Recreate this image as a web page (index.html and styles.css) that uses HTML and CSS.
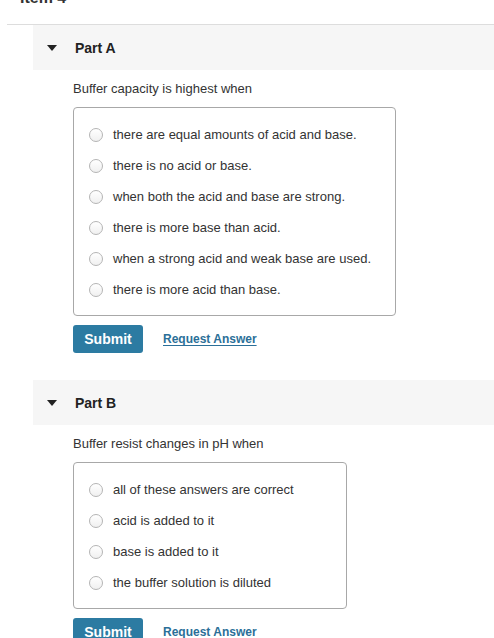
FILE: index.html
```html
<!DOCTYPE html>
<html>
<head>
<meta charset="utf-8">
<link rel="stylesheet" href="styles.css">
</head>
<body>
<h2 class="item-title">Item 4</h2>
<div class="item">
  <section class="part">
    <div class="part-header"><span class="caret"></span><span class="part-label">Part A</span></div>
    <div class="part-body">
      <p class="question">Buffer capacity is highest when</p>
      <div class="choices choices-a">
        <label class="choice"><span class="radio"></span><span>there are equal amounts of acid and base.</span></label>
        <label class="choice"><span class="radio"></span><span>there is no acid or base.</span></label>
        <label class="choice"><span class="radio"></span><span>when both the acid and base are strong.</span></label>
        <label class="choice"><span class="radio"></span><span>there is more base than acid.</span></label>
        <label class="choice"><span class="radio"></span><span>when a strong acid and weak base are used.</span></label>
        <label class="choice"><span class="radio"></span><span>there is more acid than base.</span></label>
      </div>
      <div class="actions">
        <button class="submit">Submit</button>
        <a class="request" href="#">Request Answer</a>
      </div>
    </div>
  </section>
  <section class="part">
    <div class="part-header"><span class="caret"></span><span class="part-label">Part B</span></div>
    <div class="part-body">
      <p class="question">Buffer resist changes in pH when</p>
      <div class="choices choices-b">
        <label class="choice"><span class="radio"></span><span>all of these answers are correct</span></label>
        <label class="choice"><span class="radio"></span><span>acid is added to it</span></label>
        <label class="choice"><span class="radio"></span><span>base is added to it</span></label>
        <label class="choice"><span class="radio"></span><span>the buffer solution is diluted</span></label>
      </div>
      <div class="actions">
        <button class="submit">Submit</button>
        <a class="request" href="#">Request Answer</a>
      </div>
    </div>
  </section>
</div>
</body>
</html>
```
FILE: styles.css
```css
html, body {
  margin: 0;
  padding: 0;
  background: #ffffff;
  overflow: hidden;
}
body {
  font-family: "Liberation Sans", Arial, sans-serif;
  color: #333333;
  width: 494px;
  height: 638px;
}
.item-title {
  margin: -12px 0 16px 20px;
  font-size: 16px;
  line-height: 20px;
  font-weight: bold;
  color: #333333;
}
.item {
  margin-left: 7px;
  border-top: 1px solid #dddddd;
}
.part {
  margin-bottom: 27px;
}
.part-header {
  margin-left: 26px;
  height: 45px;
  background: #f6f6f6;
  display: flex;
  align-items: center;
}
.caret {
  width: 0;
  height: 0;
  margin-left: 14px;
  border-left: 5px solid transparent;
  border-right: 5px solid transparent;
  border-top: 6px solid #222222;
}
.part-label {
  margin-left: 18px;
  font-size: 14px;
  font-weight: bold;
  color: #222222;
}
.part-body {
  padding: 10px 0 0 66px;
}
.question {
  margin: 0 0 9px 0;
  font-size: 13px;
  line-height: 18px;
}
.choices {
  box-sizing: border-box;
  border: 1px solid #a8a8a8;
  border-radius: 4px;
  padding: 11px 0 10px 15px;
}
.choices-a { width: 323px; }
.choices-b { width: 274px; }
.choice {
  height: 31px;
  display: flex;
  align-items: center;
  font-size: 13px;
  color: #333333;
}
.radio {
  box-sizing: border-box;
  width: 14px;
  height: 14px;
  border-radius: 50%;
  border: 1px solid #b5b5b5;
  background: linear-gradient(#ffffff, #f0f0f0);
  margin-right: 10px;
  flex: none;
}
.actions {
  margin-top: 9px;
  display: flex;
  align-items: center;
}
.submit {
  width: 70px;
  height: 28px;
  border: none;
  border-radius: 3px;
  background: #2c7ba2;
  color: #ffffff;
  font-family: "Liberation Sans", Arial, sans-serif;
  font-size: 14px;
  font-weight: bold;
  padding: 0;
}
.request {
  margin-left: 20px;
  font-size: 12px;
  font-weight: bold;
  color: #2b6f98;
  text-decoration: underline;
  text-underline-offset: 2px;
}
```
